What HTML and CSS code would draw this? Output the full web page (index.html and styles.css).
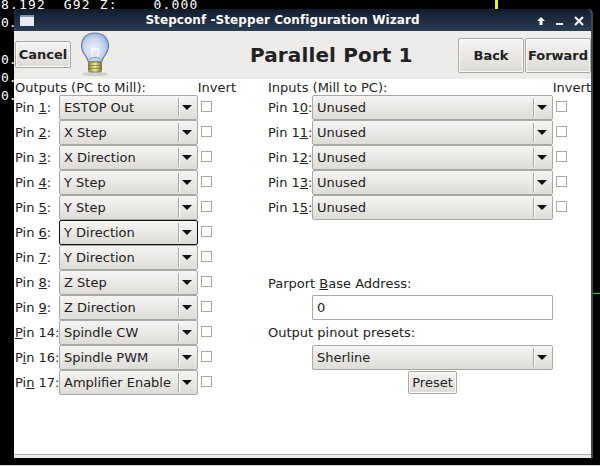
FILE: index.html
```html
<!DOCTYPE html>
<html lang="en">
<head>
    <meta charset="UTF-8">
    <title>Stepconf -Stepper Configuration Wizard</title>
    <link rel="stylesheet" href="styles.css">
</head>
<body>
    <!-- Backplot readout behind the window -->
    <div class="readout top-line">8.192&nbsp;&nbsp;G92 Z:&nbsp;&nbsp;&nbsp;&nbsp;0.000</div>
    <div class="readout side a">0.</div>
    <div class="readout side b">0.</div>
    <div class="readout side c">0.</div>
    <div class="readout side d">0.</div>
    <div class="tick-yellow"></div>
    <div class="tick-green"></div>
    <div class="desk-line"></div>

    <div class="window">
        <div class="titlebar">
            <svg class="win-icon" width="14" height="11" viewBox="0 0 14 11">
                <rect x="0" y="0" width="14" height="11" fill="#e8ecf0"/>
                <rect x="0" y="0" width="14" height="2" fill="#7c94bc"/>
            </svg>
            <span class="title">Stepconf -Stepper Configuration Wizard</span>
            <div class="win-btns">
                <svg width="10" height="10" viewBox="0 0 10 10"><path d="M5 1 L9 5 H6.5 V9 H3.5 V5 H1 Z" fill="#fff"/></svg>
                <svg width="10" height="10" viewBox="0 0 10 10"><rect x="1" y="7" width="7" height="2" fill="#fff"/></svg>
                <svg width="10" height="10" viewBox="0 0 10 10"><path d="M1 1 L9 9 M9 1 L1 9" stroke="#fff" stroke-width="2"/></svg>
            </div>
        </div>

        <div class="header">
            <button class="btn cancel">Cancel</button>
            <svg class="bulb" width="32" height="46" viewBox="0 0 32 46">
                <defs>
                    <radialGradient id="glass" cx="0.45" cy="0.55" r="0.65">
                        <stop offset="0" stop-color="#eef2f6"/>
                        <stop offset="0.55" stop-color="#c9d8ee"/>
                        <stop offset="1" stop-color="#7fa5dc"/>
                    </radialGradient>
                    <linearGradient id="base" x1="0" x2="1" y1="0" y2="0">
                        <stop offset="0" stop-color="#8b8a3c"/>
                        <stop offset="0.5" stop-color="#ecea9e"/>
                        <stop offset="1" stop-color="#77762f"/>
                    </linearGradient>
                </defs>
                <ellipse cx="16" cy="43" rx="13" ry="2" fill="#c4c3c0" opacity="0.7"/>
                <path d="M16 2 C7 2 2.5 8 2.5 15 C2.5 22 8 25 9.5 31 H22.5 C24 25 29.5 22 29.5 15 C29.5 8 25 2 16 2 Z" fill="url(#glass)" stroke="#6b7f9e" stroke-width="1.2"/>
                <path d="M12 18 L14 27 M20 18 L18 27 M12 18 H20" stroke="#fff" stroke-width="1" fill="none"/>
                <path d="M11 28 Q16 25 21 28" stroke="#9a9850" stroke-width="1.2" fill="none"/>
                <rect x="9.5" y="31" width="13" height="10" rx="1.5" fill="url(#base)" stroke="#66652a" stroke-width="0.7"/>
                <path d="M10 34.5 H22 M10 37.5 H22" stroke="#77762f" stroke-width="0.7"/>
            </svg>
            <h1>Parallel Port 1</h1>
            <div class="nav">
                <button class="btn back">Back</button>
                <button class="btn forward">Forward</button>
            </div>
        </div>

        <div class="content">
            <div class="col-left">
                <div class="heads">
                    <span>Outputs (PC to Mill):</span>
                    <span>Invert</span>
                </div>
                <div class="row"><label>Pin <u>1</u>:</label><div class="combo"><span>ESTOP Out</span><i></i></div><b class="check"></b></div>
                <div class="row"><label>Pin <u>2</u>:</label><div class="combo"><span>X Step</span><i></i></div><b class="check"></b></div>
                <div class="row"><label>Pin <u>3</u>:</label><div class="combo"><span>X Direction</span><i></i></div><b class="check"></b></div>
                <div class="row"><label>Pin <u>4</u>:</label><div class="combo"><span>Y Step</span><i></i></div><b class="check"></b></div>
                <div class="row"><label>Pin <u>5</u>:</label><div class="combo"><span>Y Step</span><i></i></div><b class="check"></b></div>
                <div class="row"><label>Pin <u>6</u>:</label><div class="combo focused"><span>Y Direction</span><i></i></div><b class="check"></b></div>
                <div class="row"><label>Pin <u>7</u>:</label><div class="combo"><span>Y Direction</span><i></i></div><b class="check"></b></div>
                <div class="row"><label>Pin <u>8</u>:</label><div class="combo"><span>Z Step</span><i></i></div><b class="check"></b></div>
                <div class="row"><label>Pin <u>9</u>:</label><div class="combo"><span>Z Direction</span><i></i></div><b class="check"></b></div>
                <div class="row"><label><u>P</u>in 14:</label><div class="combo"><span>Spindle CW</span><i></i></div><b class="check"></b></div>
                <div class="row"><label>P<u>i</u>n 16:</label><div class="combo"><span>Spindle PWM</span><i></i></div><b class="check"></b></div>
                <div class="row"><label>Pi<u>n</u> 17:</label><div class="combo"><span>Amplifier Enable</span><i></i></div><b class="check"></b></div>
            </div>

            <div class="col-right">
                <div class="heads">
                    <span>Inputs (Mill to PC):</span>
                    <span>Invert</span>
                </div>
                <div class="row"><label>Pin 1<u>0</u>:</label><div class="combo"><span>Unused</span><i></i></div><b class="check"></b></div>
                <div class="row"><label>Pin 1<u>1</u>:</label><div class="combo"><span>Unused</span><i></i></div><b class="check"></b></div>
                <div class="row"><label>Pin 1<u>2</u>:</label><div class="combo"><span>Unused</span><i></i></div><b class="check"></b></div>
                <div class="row"><label>Pin 1<u>3</u>:</label><div class="combo"><span>Unused</span><i></i></div><b class="check"></b></div>
                <div class="row"><label>Pin 1<u>5</u>:</label><div class="combo"><span>Unused</span><i></i></div><b class="check"></b></div>

                <div class="field-label base-label">Parport <u>B</u>ase Address:</div>
                <div class="entry">0</div>
                <div class="field-label">Output pinout presets:</div>
                <div class="combo preset-combo"><span>Sherline</span><i></i></div>
                <button class="btn preset">Preset</button>
            </div>
        </div>
    </div>
</body>
</html>
```

FILE: styles.css
```css
html, body {
    margin: 0;
    height: 100%;
}
body {
    position: relative;
    width: 600px;
    height: 466px;
    overflow: hidden;
    background: #000;
    font-family: "DejaVu Sans", sans-serif;
    font-size: 13px;
    color: #222;
}
.readout {
    position: absolute;
    color: #fff;
    font-family: "DejaVu Sans Mono", monospace;
    font-size: 13px;
    letter-spacing: 1.15px;
    line-height: 15px;
    white-space: nowrap;
}
.top-line { left: 1px; top: -3px; }
.side {
    left: 1px;
    letter-spacing: 0;
}
.side.a { top: 15px; }
.side.b { top: 52px; }
.side.c { top: 70px; }
.side.d { top: 88px; }
.tick-yellow {
    position: absolute;
    left: 495px;
    top: 0;
    width: 3px;
    height: 9px;
    background: #f4f000;
}
.tick-green {
    position: absolute;
    left: 593px;
    top: 293px;
    width: 7px;
    height: 1px;
    background: #1fd01f;
}
.desk-line {
    position: absolute;
    left: 0;
    top: 465px;
    width: 600px;
    height: 1px;
    background: #d4d4d4;
}
.window {
    position: absolute;
    left: 14px;
    top: 9px;
    width: 577px;
    height: 449px;
    display: flex;
    flex-direction: column;
    background: #edecea;
    border-right: 2px solid #3c4a5c;
    border-radius: 5px 5px 0 0;
    overflow: hidden;
}
.titlebar {
    height: 22px;
    flex: none;
    box-sizing: border-box;
    padding-right: 40px;
    position: relative;
    display: flex;
    align-items: center;
    justify-content: center;
    background: linear-gradient(#0f1c2c, #2c3e55);
    color: #fff;
    font-weight: bold;
    font-size: 12px;
    letter-spacing: 0.08px;
}
.win-icon {
    position: absolute;
    left: 6px;
    top: 6px;
}
.win-btns {
    position: absolute;
    right: 7px;
    top: 7px;
    display: flex;
    gap: 9px;
}
.header {
    height: 48px;
    flex: none;
    display: flex;
    align-items: center;
    background: #edecea;
    position: relative;
}
.header h1 {
    position: absolute;
    left: 236px;
    top: 11px;
    margin: 0;
    font-size: 20px;
    line-height: 26px;
    letter-spacing: 0.12px;
    color: #222;
}
.bulb {
    margin-left: 8px;
    margin-top: -2px;
}
.btn {
    font-family: inherit;
    font-size: 13px;
    color: #222;
    background: linear-gradient(#f5f4f2, #dddbd7);
    border: 1px solid #a9a8a3;
    border-radius: 2px;
    padding: 0;
    box-shadow: inset 0 0 0 1px #fafaf8;
}
.cancel, .back, .forward { font-weight: bold; }
.cancel {
    width: 56px;
    height: 27px;
    margin-left: 1px;
    margin-top: -1px;
}
.nav {
    margin-left: auto;
    display: flex;
    gap: 1px;
}
.back, .forward {
    height: 35px;
}
.back { width: 66px; }
.forward { width: 66px; }
.content {
    flex: 1;
    background: #fff;
    display: flex;
    border-bottom: 1px solid #b2b1ac;
    margin-bottom: 3px;
    padding-top: 1px;
}
.heads {
    display: flex;
    justify-content: space-between;
    height: 15px;
    line-height: 15px;
}
.col-left {
    width: 254px;
    flex: none;
    padding-left: 1px;
    box-sizing: border-box;
}
.col-left .heads { width: 221px; }
.col-right {
    flex: 1;
    min-width: 0;
}
.col-right .heads { width: 323px; }
.row {
    display: flex;
    align-items: center;
    height: 25px;
}
.row label {
    width: 44px;
    flex: none;
    white-space: nowrap;
}
.combo {
    box-sizing: border-box;
    height: 25px;
    display: flex;
    align-items: center;
    background: linear-gradient(#f6f5f3, #dedcd8);
    border: 1px solid #a9a8a3;
    border-radius: 2px;
    padding-left: 4px;
    position: relative;
    white-space: nowrap;
}
.col-left .combo { width: 139px; }
.col-right .combo { width: 241px; }
.combo.focused {
    border: 1px solid #111;
}
.combo span { flex: 1; }
.combo::after {
    content: "";
    width: 1px;
    height: 19px;
    background: #a9a8a3;
    box-shadow: 1px 0 0 #fff;
    position: absolute;
    right: 18px;
    top: 2px;
}
.combo i {
    width: 0;
    height: 0;
    border-left: 5px solid transparent;
    border-right: 5px solid transparent;
    border-top: 5px solid #111;
    margin-right: 5px;
}
.check {
    width: 9px;
    height: 9px;
    margin-left: 3px;
    margin-top: -2px;
    border: 1px solid #a9a8a3;
    background: #fff;
}
.field-label {
    height: 15px;
    line-height: 15px;
    margin-top: 5px;
    margin-bottom: 5px;
}
.base-label {
    margin-top: 56px;
    margin-bottom: 4px;
}
.col-right > .entry, .col-right > .preset-combo {
    margin-left: 44px;
}
.entry {
    box-sizing: border-box;
    width: 241px;
    height: 25px;
    line-height: 23px;
    padding-left: 4px;
    border: 1px solid #a9a8a3;
    border-radius: 1px;
    background: #fff;
}
.preset {
    display: block;
    width: 49px;
    height: 23px;
    margin: 1px 0 0 140px;
    font-weight: normal;
}
```
